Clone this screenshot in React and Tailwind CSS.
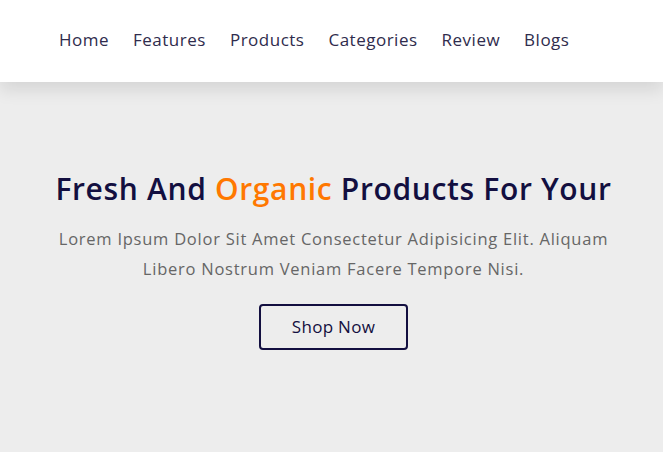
export default function App() {
    const links = ['Home', 'Features', 'Products', 'Categories', 'Review', 'Blogs'];

    return (
        <div className="min-h-screen bg-[#ededed] font-['Open_Sans',sans-serif]">
            <header className="relative z-10 flex h-[82px] items-center bg-white px-[59px] shadow-[0_8px_16px_rgba(0,0,0,0.1)]">
                <nav className="-mt-[2px] flex gap-[24px]">
                    {links.map((l) => (
                        <a key={l} href="#" className="text-[17px] tracking-[0.5px] text-[#2f2c4d]">
                            {l}
                        </a>
                    ))}
                </nav>
            </header>

            <section className="flex flex-col items-center pl-[36px] pr-[32px] pt-[86px] text-center">
                <h1 className="text-[30px] font-semibold leading-[42px] tracking-[0.65px] text-[#130f40]">
                    Fresh And <span className="text-[#ff7800]">Organic</span> Products For Your
                </h1>
                <p className="mt-[14px] max-w-[580px] text-[16.5px] leading-[30px] tracking-[0.75px] text-[#666]">
                    Lorem Ipsum Dolor Sit Amet Consectetur Adipisicing Elit. Aliquam Libero Nostrum Veniam Facere Tempore Nisi.
                </p>
                <button className="mt-[20px] h-[46px] w-[149px] rounded-[4px] border-2 border-[#130f40] text-[17px] tracking-[0.3px] text-[#130f40]">
                    Shop Now
                </button>
            </section>
        </div>
    );
}
